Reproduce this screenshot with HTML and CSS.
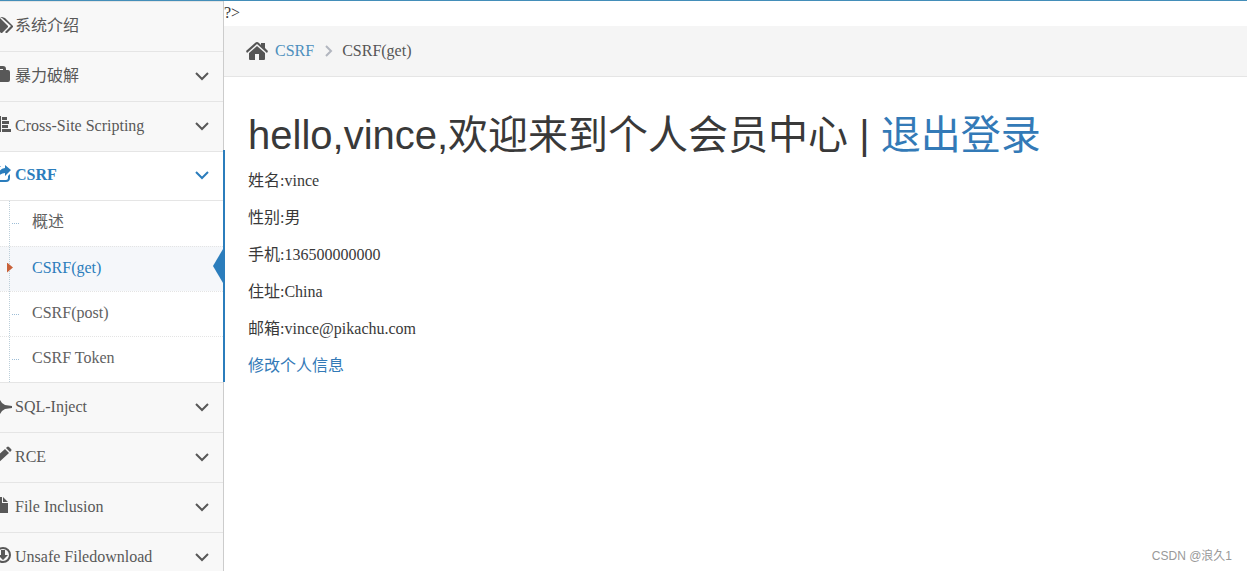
FILE: index.html
```html
<!DOCTYPE html>
<html lang="zh">
<head>
    <meta charset="UTF-8">
    <meta name="viewport" content="width=device-width, initial-scale=1.0">
    <title>CSRF(get)</title>
    <link rel="stylesheet" href="styles.css">
</head>
<body>
    <div class="main-container">
        <nav class="sidebar">
            <ul class="nav-list">
                <li>
                    <a class="nav-link" href="#">
                        <svg class="menu-icon" viewBox="0 0 22 22"><path d="M0 2h5l3 1 8 8v1l-6 6H9L0 9zM8 2h2l3 1 8 8v1l-6 6h-1l-1-1 6-6-9-8z"/></svg>
                        <span>系统介绍</span>
                    </a>
                </li>
                <li>
                    <a class="nav-link" href="#">
                        <svg class="menu-icon" viewBox="0 0 22 22"><path d="M1 5h2V4q0-3 3-3h5q3 0 3 3v1h2q2 0 2 2v8q0 2-2 2H1zM6 4v1h5V4z"/></svg>
                        <span>暴力破解</span>
                        <svg class="arrow" viewBox="0 0 14 10"><path d="M1 2l6 6 6-6"/></svg>
                    </a>
                </li>
                <li>
                    <a class="nav-link" href="#">
                        <svg class="menu-icon" viewBox="0 0 22 22"><path d="M7 1h2v16H7zM10 2h5v3h-5zM10 6h7v3h-7zM10 10h6v3h-6zM10 14h9v3h-9z"/></svg>
                        <span>Cross-Site Scripting</span>
                        <svg class="arrow" viewBox="0 0 14 10"><path d="M1 2l6 6 6-6"/></svg>
                    </a>
                </li>
                <li class="open">
                    <a class="nav-link" href="#">
                        <svg class="menu-icon" viewBox="0 0 22 22"><path d="M13 1l6 5-6 6V9q-4 0-7 4 0-8 7-9zM9 2L7 4H6Q4 4 4 6v8q0 2 2 2h8q2 0 2-2v-2l2-2v4q0 4-4 4H5q-4 0-4-4V6q0-4 4-4z"/></svg>
                        <span>CSRF</span>
                        <svg class="arrow" viewBox="0 0 14 10"><path d="M1 2l6 6 6-6"/></svg>
                    </a>
                    <ul class="submenu">
                        <li><a href="#">概述</a></li>
                        <li class="active"><a href="#">CSRF(get)</a></li>
                        <li><a href="#">CSRF(post)</a></li>
                        <li><a href="#">CSRF Token</a></li>
                    </ul>
                </li>
                <li>
                    <a class="nav-link" href="#">
                        <svg class="menu-icon" viewBox="0 0 22 22"><path d="M4 1h2l4 6 3 2 7 1v2l-7 1-3 2-4 6H4V14H1V8h3z"/></svg>
                        <span>SQL-Inject</span>
                        <svg class="arrow" viewBox="0 0 14 10"><path d="M1 2l6 6 6-6"/></svg>
                    </a>
                </li>
                <li>
                    <a class="nav-link" href="#">
                        <svg class="menu-icon" viewBox="0 0 22 22"><path d="M13 3l4 4L6 17l-5 1 1-5zM14 2l1-1q1-1 2 0l2 2q1 1 0 2l-1 1z"/></svg>
                        <span>RCE</span>
                        <svg class="arrow" viewBox="0 0 14 10"><path d="M1 2l6 6 6-6"/></svg>
                    </a>
                </li>
                <li>
                    <a class="nav-link" href="#">
                        <svg class="menu-icon" viewBox="0 0 22 22"><path d="M2 1h8v6h6v10H2zM11 1l5 5h-5z"/></svg>
                        <span>File Inclusion</span>
                        <svg class="arrow" viewBox="0 0 14 10"><path d="M1 2l6 6 6-6"/></svg>
                    </a>
                </li>
                <li>
                    <a class="nav-link" href="#">
                        <svg class="menu-icon" viewBox="0 0 22 22"><circle class="ring" cx="11" cy="9" r="7"/><path d="M9 4h4v5h3l-5 5-5-5h3z"/></svg>
                        <span>Unsafe Filedownload</span>
                        <svg class="arrow" viewBox="0 0 14 10"><path d="M1 2l6 6 6-6"/></svg>
                    </a>
                </li>
            </ul>
        </nav>
        <main class="main-content">
            <div class="stray">?&gt;</div>
            <ul class="breadcrumb">
                <li>
                    <svg class="home-icon" viewBox="0 0 24 20"><path d="M12 5l8 7v6q0 1-1 1h-5v-6h-4v6H5q-1 0-1-1v-6zM12 1q1 0 2 1l2 2V2h4v5l3 3-1 2L12 3 2 12l-1-2 9-8q1-1 2-1z"/></svg>
                    <a href="#">CSRF</a>
                </li>
                <li>
                    <svg class="separator" viewBox="0 0 8 12"><path d="M1 1l5 5-5 5"/></svg>
                    CSRF(get)
                </li>
            </ul>
            <div class="page-content">
                <h1>hello,vince,欢迎来到个人会员中心 | <a href="#">退出登录</a></h1>
                <p>姓名:vince</p>
                <p>性别:男</p>
                <p>手机:136500000000</p>
                <p>住址:China</p>
                <p>邮箱:vince@pikachu.com</p>
                <p><a href="#">修改个人信息</a></p>
            </div>
        </main>
    </div>
    <div class="watermark">CSDN @浪久1</div>
</body>
</html>
```

FILE: styles.css
```css
* {
    box-sizing: border-box;
}
body {
    margin: 0;
    overflow: hidden;
    background: #fff;
    color: #393939;
    font-family: "Liberation Serif", "Noto Sans CJK SC", serif;
    font-size: 16px;
    line-height: 24px;
}
a {
    color: #337ab7;
    text-decoration: none;
}
ul {
    list-style: none;
    margin: 0;
    padding: 0;
}
.main-container {
    display: flex;
    height: 100vh;
    overflow: hidden;
    border-top: 1px solid #438eb9;
}
.sidebar {
    flex: none;
    width: 224px;
    background: #f8f8f8;
    border-right: 1px solid #ccc;
}
.nav-list {
    border-top: 1px solid #e5e5e5;
}
.nav-list > li {
    border-bottom: 1px solid #e5e5e5;
}
.nav-link {
    display: flex;
    align-items: center;
    height: 49px;
    padding: 0 14px 2px 0;
    color: #585858;
}
.menu-icon {
    flex: none;
    width: 22px;
    height: 22px;
    margin-left: -8px;
    margin-right: 1px;
    fill: currentColor;
}
.ring {
    fill: none;
    stroke: currentColor;
    stroke-width: 2;
}
.arrow {
    width: 14px;
    height: 10px;
    margin-left: auto;
    fill: none;
    stroke: currentColor;
    stroke-width: 2;
}

/* opened item */
.open {
    position: relative;
    background: #fff;
}
.open::after {
    content: "";
    position: absolute;
    top: -2px;
    bottom: 0;
    right: -2px;
    width: 2px;
    background: #2b7dbc;
}
.open .nav-link {
    height: 48px;
    color: #2b7dbc;
    font-weight: bold;
}
.submenu {
    position: relative;
    padding-bottom: 1px;
    border-top: 1px solid #e5e5e5;
}
.submenu::before {
    content: "";
    position: absolute;
    z-index: 1;
    top: 0;
    bottom: 0;
    left: 9px;
    border-left: 1px dotted #bccfda;
}
.submenu li {
    position: relative;
}
.submenu li + li {
    border-top: 1px dotted #e4e4e4;
}
.submenu li::before {
    content: "";
    position: absolute;
    top: 22px;
    left: 12px;
    width: 7px;
    border-top: 1px dotted #9dbdd6;
}
.submenu a {
    display: block;
    padding: 9px 0 12px 32px;
    color: #616161;
}
.submenu li + li a {
    padding: 9px 0 11px 32px;
}
.submenu .active {
    background: #f5f7fa;
}
.submenu .active a {
    color: #2b7dbc;
}
.submenu .active::before {
    z-index: 2;
    top: 12px;
    left: 7px;
    width: 6px;
    height: 17px;
    border: 0;
    background: linear-gradient(#c86139, #c86139) center / 100% 10px no-repeat;
    clip-path: polygon(0 20%, 100% 50%, 0 80%);
}
.submenu .active::after {
    content: "";
    position: absolute;
    top: 2px;
    right: 0;
    width: 10px;
    height: 34px;
    background: #2b7dbc;
    clip-path: polygon(100% 0, 0 50%, 100% 100%);
}

.main-content {
    flex: 1;
    min-width: 0;
}
.stray {
    height: 25px;
}
.breadcrumb {
    display: flex;
    align-items: center;
    height: 51px;
    padding: 0 21px;
    background: #f5f5f5;
    border-bottom: 1px solid #e5e5e5;
    color: #555;
}
.breadcrumb li {
    display: flex;
    align-items: center;
}
.breadcrumb a {
    color: #4c8fbd;
}
.home-icon {
    width: 24px;
    height: 20px;
    margin-right: 6px;
    fill: #555;
}
.separator {
    width: 8px;
    height: 12px;
    margin: 0 9px 0 11px;
    fill: none;
    stroke: #b2b6bf;
    stroke-width: 2;
}
.page-content {
    padding: 33px 24px;
}
h1 {
    margin: 0 0 9px;
    font-family: "Liberation Sans", "Noto Sans CJK SC", sans-serif;
    font-size: 40px;
    font-weight: normal;
    line-height: 50px;
}
p {
    margin: 0 0 13px;
}
.watermark {
    position: absolute;
    right: 15px;
    bottom: 3px;
    color: #999;
    font-family: "Liberation Sans", "Noto Sans CJK SC", sans-serif;
    font-size: 12px;
}
```
